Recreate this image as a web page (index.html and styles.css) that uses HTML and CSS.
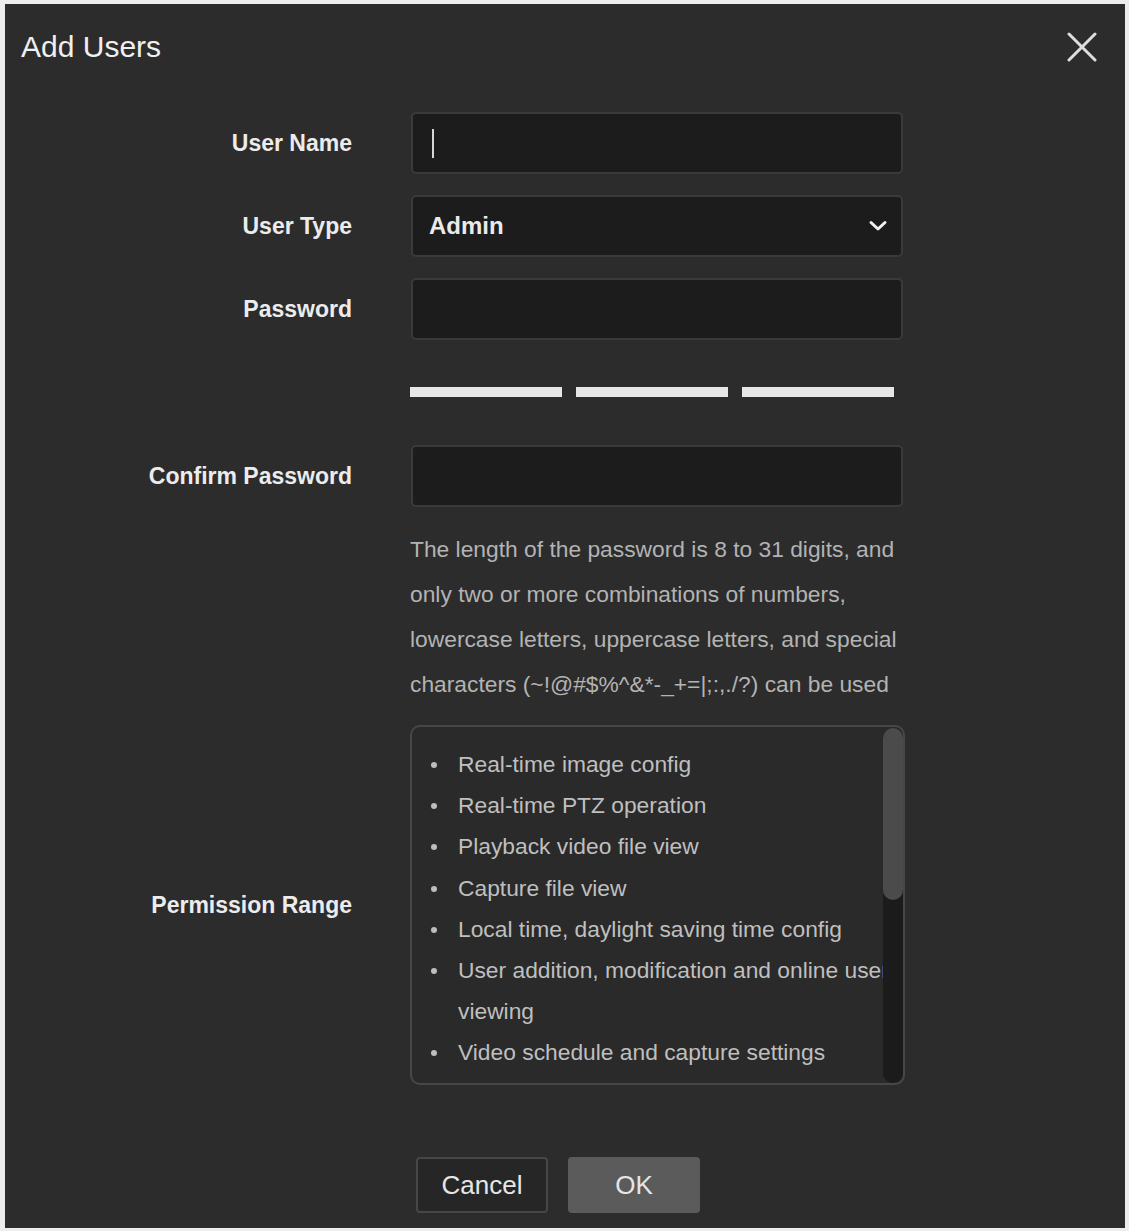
FILE: index.html
```html
<!DOCTYPE html>
<html lang="en">
<head>
<meta charset="utf-8">
<title>Add Users</title>
<link rel="stylesheet" href="styles.css">
</head>
<body>
<div class="dialog">
  <div class="header">
    <h1 class="title">Add Users</h1>
    <button class="close" aria-label="Close">
      <svg width="30" height="30" viewBox="0 0 30 30"><path d="M2 2 L28 28 M28 2 L2 28" stroke="#dedede" stroke-width="3" stroke-linecap="round" fill="none"/></svg>
    </button>
  </div>

  <div class="form">
    <div class="row row-first">
      <label class="label">User Name</label>
      <div class="field input"><span class="caret"></span></div>
    </div>
    <div class="row row-gap">
      <label class="label">User Type</label>
      <div class="field input select">
        <span class="select-value">Admin</span>
        <svg class="chevron" width="20" height="12" viewBox="0 0 20 12"><path d="M3 2.5 L10 9 L17 2.5" stroke="#f0f0f0" stroke-width="3" stroke-linecap="round" stroke-linejoin="round" fill="none"/></svg>
      </div>
    </div>
    <div class="row row-gap">
      <label class="label">Password</label>
      <div class="field input"></div>
    </div>
    <div class="row row-bars">
      <span class="label"></span>
      <div class="bars">
        <span class="bar"></span><span class="bar"></span><span class="bar"></span>
      </div>
    </div>
    <div class="row row-confirm">
      <label class="label">Confirm Password</label>
      <div class="field input"></div>
    </div>
    <div class="row row-hint">
      <span class="label"></span>
      <p class="hint">The length of the password is 8 to 31 digits, and only two or more combinations of numbers, lowercase letters, uppercase letters, and special characters (~!@#$%^&amp;*-_+=|;:,./?) can be used</p>
    </div>
    <div class="row row-perm">
      <label class="label">Permission Range</label>
      <div class="perm">
        <ul class="perm-list">
          <li>Real-time image config</li>
          <li>Real-time PTZ operation</li>
          <li>Playback video file view</li>
          <li>Capture file view</li>
          <li>Local time, daylight saving time config</li>
          <li>User addition, modification and online user viewing</li>
          <li>Video schedule and capture settings</li>
        </ul>
        <div class="scroll-track"><div class="scroll-thumb"></div></div>
      </div>
    </div>
  </div>

  <div class="actions">
    <button class="btn btn-cancel">Cancel</button>
    <button class="btn btn-ok">OK</button>
  </div>
</div>
</body>
</html>
```

FILE: styles.css
```css
* { box-sizing: border-box; }

html, body {
  margin: 0;
  padding: 0;
}

body {
  background: #ededed;
  font-family: "Liberation Sans", Arial, sans-serif;
  width: 1129px;
  height: 1231px;
  overflow: hidden;
  padding: 4px 4px 3px 5px;
}

.dialog {
  position: relative;
  width: 1120px;
  height: 1224px;
  background: #2c2c2c;
  display: flex;
  flex-direction: column;
}

.header {
  height: 86px;
  display: flex;
  align-items: center;
  justify-content: space-between;
  padding: 0 28px 0 16px;
}

.title {
  margin: 0;
  font-size: 30px;
  font-weight: normal;
  color: #f0f0f0;
  line-height: 1;
}

.close {
  width: 30px;
  height: 30px;
  padding: 0;
  border: none;
  background: none;
  display: flex;
}

.form {
  display: flex;
  flex-direction: column;
}

.row {
  display: flex;
  align-items: center;
}

.row-first { margin-top: 22px; }
.row-gap { margin-top: 21px; }
.row-bars { margin-top: 47px; }
.row-confirm { margin-top: 48px; }
.row-hint { margin-top: 20px; }
.row-perm { margin-top: 18px; }

.label {
  width: 347px;
  flex: none;
  margin-right: 59px;
  text-align: right;
  font-size: 23px;
  font-weight: bold;
  color: #ececec;
}

.field {
  width: 492px;
  flex: none;
}

.input {
  height: 62px;
  background: #1c1c1c;
  border: 2px solid #3a3a3a;
  border-radius: 5px;
  display: flex;
  align-items: center;
  padding: 0 13px 0 19px;
}

.caret {
  display: block;
  width: 2px;
  height: 29px;
  background: #d6d6d6;
}

.select {
  justify-content: space-between;
  padding-left: 16px;
}

.select-value {
  font-size: 24px;
  font-weight: bold;
  color: #eaeaea;
}

.bars {
  display: flex;
  gap: 14px;
  margin-left: -1px;
}

.bar {
  display: block;
  width: 152px;
  height: 10px;
  background: #e6e6e6;
}

.hint {
  margin: 0;
  width: 495px;
  margin-left: -1px;
  font-size: 22.8px;
  line-height: 45px;
  color: #b3b3b3;
}

.perm {
  position: relative;
  width: 495px;
  height: 360px;
  margin-left: -1px;
  border: 2px solid #474747;
  border-radius: 10px;
  background: #2a2a2a;
  overflow: hidden;
}

.perm-list {
  list-style: none;
  margin: 0;
  padding: 17px 0 0 19px;
  font-size: 22.8px;
  line-height: 41.2px;
  color: #bfbfbf;
}

.perm-list li {
  display: grid;
  grid-template-columns: 27px 1fr;
  white-space: normal;
}

.perm-list li::before {
  content: "";
  width: 6px;
  height: 6px;
  border-radius: 50%;
  background: #bdbdbd;
  margin-top: 18px;
}

.scroll-track {
  position: absolute;
  top: 1px;
  right: 0;
  bottom: 0;
  width: 20px;
  background: #1b1b1b;
  border-radius: 10px;
}

.scroll-thumb {
  width: 20px;
  height: 172px;
  background: #4b4b4b;
  border-radius: 10px;
}

.actions {
  display: flex;
  gap: 20px;
  margin-top: 72px;
  padding-left: 411px;
}

.btn {
  width: 132px;
  height: 56px;
  border-radius: 4px;
  font-family: "Liberation Sans", Arial, sans-serif;
  font-size: 26px;
  color: #e6e6e6;
  padding: 0;
}

.btn-cancel {
  background: #262626;
  border: 2px solid #474747;
}

.btn-ok {
  background: #5b5b5b;
  border: 2px solid #5b5b5b;
}
```
